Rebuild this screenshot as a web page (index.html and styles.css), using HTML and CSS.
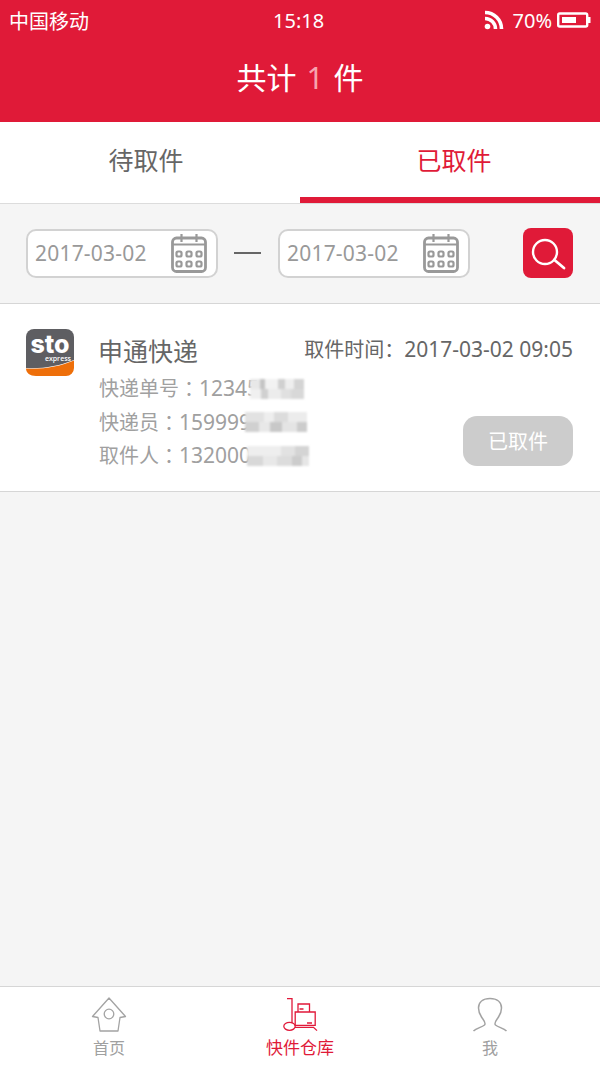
FILE: index.html
```html
<!DOCTYPE html>
<html lang="zh-CN">
<head>
    <meta charset="UTF-8">
    <meta name="viewport" content="width=device-width, initial-scale=1.0">
    <title>快件仓库</title>
    <link rel="stylesheet" href="styles.css">
</head>
<body>

<div class="page">
    <header class="top">
        <div class="status">
            <span class="carrier">中国移动</span>
            <span class="clock">15:18</span>
            <div class="status-right">
                <svg class="wifi" viewBox="0 0 20 20" width="20" height="20">
                    <circle cx="3.500" cy="16.500" r="2.800" fill="#fff"/>
                    <path d="M1 8.500a10.500 10.500 0 0 1 10.500 10.500M1 2.500a16.500 16.500 0 0 1 16.500 16.500" fill="none" stroke="#fff" stroke-width="3.600"/>
                </svg>
                <span class="percent">70%</span>
                <svg class="battery" viewBox="0 0 34 16" width="34" height="16">
                    <rect x="1.200" y="1.500" width="29" height="13" rx="1.500" fill="none" stroke="#fff" stroke-width="2.400"/>
                    <rect x="5" y="5" width="14" height="6" fill="#fff"/>
                    <rect x="31" y="5" width="2.500" height="6" fill="#fff"/>
                </svg>
            </div>
        </div>
        <h1 class="total">共计 <span class="total-num">1</span> 件</h1>
    </header>

    <nav class="tabs">
        <div class="tab">待取件</div>
        <div class="tab tab-on">已取件</div>
    </nav>

    <div class="filter">
        <div class="date-box">
            <span>2017-03-02</span>
            <svg class="cal" viewBox="0 0 36 39" width="36" height="39">
                <rect x="1.500" y="4" width="33" height="33.500" rx="4" fill="none" stroke="#999" stroke-width="2.800"/>
                <path d="M1.500 10.500h33M10.500 0v8M25.500 0v8" fill="none" stroke="#999" stroke-width="2.200"/>
                <g fill="none" stroke="#999" stroke-width="2.200">
                    <rect x="5.500" y="17.500" width="5" height="5" rx="1.500"/><rect x="15.500" y="17.500" width="5" height="5" rx="1.500"/><rect x="25.500" y="17.500" width="5" height="5" rx="1.500"/>
                    <rect x="5.500" y="27.500" width="5" height="5" rx="1.500"/><rect x="15.500" y="27.500" width="5" height="5" rx="1.500"/><rect x="25.500" y="27.500" width="5" height="5" rx="1.500"/>
                </g>
            </svg>
        </div>
        <div class="dash"></div>
        <div class="date-box">
            <span>2017-03-02</span>
            <svg class="cal" viewBox="0 0 36 39" width="36" height="39">
                <rect x="1.500" y="4" width="33" height="33.500" rx="4" fill="none" stroke="#999" stroke-width="2.800"/>
                <path d="M1.500 10.500h33M10.500 0v8M25.500 0v8" fill="none" stroke="#999" stroke-width="2.200"/>
                <g fill="none" stroke="#999" stroke-width="2.200">
                    <rect x="5.500" y="17.500" width="5" height="5" rx="1.500"/><rect x="15.500" y="17.500" width="5" height="5" rx="1.500"/><rect x="25.500" y="17.500" width="5" height="5" rx="1.500"/>
                    <rect x="5.500" y="27.500" width="5" height="5" rx="1.500"/><rect x="15.500" y="27.500" width="5" height="5" rx="1.500"/><rect x="25.500" y="27.500" width="5" height="5" rx="1.500"/>
                </g>
            </svg>
        </div>
        <button class="search-btn">
            <svg viewBox="0 0 50 50" width="50" height="50">
                <circle cx="22" cy="24" r="12" fill="none" stroke="#fff" stroke-width="2.400"/>
                <path d="M31.500 32l9.500 8" fill="none" stroke="#fff" stroke-width="2.800" stroke-linecap="round"/>
            </svg>
        </button>
    </div>

    <section class="card">
        <svg class="logo" viewBox="0 0 48 47" width="48" height="47">
            <path d="M8 0h32a8 8 0 0 1 8 8v23c-15 6-32 9-48 8V8a8 8 0 0 1 8-8z" fill="#5e5e62"/>
            <path d="M0 39.500c17 1 34-2 48-8v7.500a8 8 0 0 1-8 8H10c-6 0-10-3-10-7.500z" fill="#ee6f0a"/>
            <text class="logo-sto" x="24" y="24" text-anchor="middle">sto</text>
            <text class="logo-exp" x="45" y="31.500" text-anchor="end">express</text>
        </svg>
        <div class="info">
            <h2 class="name">申通快递</h2>
            <p class="line">快递单号<span class="colon">：</span><span class="num">12345</span><span class="blur blur-a"></span></p>
            <p class="line">快递员<span class="colon">：</span><span class="num">159999</span><span class="blur blur-b"></span></p>
            <p class="line">取件人<span class="colon">：</span><span class="num">132000</span><span class="blur blur-c"></span></p>
        </div>
        <div class="side">
            <div class="pick-time">取件时间<span class="colon">：</span><span class="num">2017-03-02 09:05</span></div>
            <div class="pick-btn">已取件</div>
        </div>
    </section>

    <div class="empty"></div>

    <footer class="bar">
        <div class="bar-item bar-home">
            <svg viewBox="0 0 36 36" width="36" height="36" fill="none" stroke="#a3a3a3" stroke-width="1.300">
                <path d="M18 1L1.500 19.500l5.500 1 2 13.500h18l2-13.500 5.500-1z" stroke-linejoin="round"/>
                <circle cx="18" cy="17" r="4.800"/>
            </svg>
            <span>首页</span>
        </div>
        <div class="bar-item bar-on">
            <svg viewBox="0 0 36 36" width="36" height="36" fill="none" stroke="#e1193a" stroke-width="1.300">
                <path d="M5 1.700h5v24.500"/>
                <ellipse cx="7.500" cy="29.300" rx="5.700" ry="4"/>
                <path d="M13 30.300h18.500l3.500 3.300"/>
                <path d="M16 15V7h11.500v8M13.200 28.300V15h20v13.300zM17.500 12h4M25 26h5"/>
            </svg>
            <span>快件仓库</span>
        </div>
        <div class="bar-item bar-me">
            <svg viewBox="0 0 36 36" width="36" height="36" fill="none" stroke="#a3a3a3" stroke-width="1.500">
                <path d="M1.500 34c3-3 8-3.500 11-6 2-2-1-5-3-8-2-3-3-6-3-9C6.500 5 11 1.500 18 1.500S29.500 5 29.500 11c0 3-1 6-3 9-2 3-5 6-3 8 3 2.500 8 3 11 6"/>
            </svg>
            <span>我</span>
        </div>
    </footer>
</div>

</body>
</html>
```

FILE: styles.css
```css
* {
    margin: 0;
    padding: 0;
    box-sizing: border-box;
}

body {
    font-family: "Noto Sans", "Noto Sans CJK SC", sans-serif;
    background-color: #f5f5f5;
}

.page {
    display: flex;
    flex-direction: column;
    width: 600px;
    height: 1067px;
    overflow: hidden;
}

.top {
    height: 122px;
    background-color: #e01a38;
    color: white;
}

.status {
    display: flex;
    justify-content: space-between;
    align-items: center;
    height: 40px;
    padding: 0 9px 0 9px;
    font-size: 20px;
    position: relative;
}

.clock {
    position: absolute;
    left: 273px;
}

.status-right {
    display: flex;
    align-items: center;
    gap: 9px;
}

.percent {
    margin-right: -4px;
}

.total {
    font-size: 30px;
    font-weight: 400;
    text-align: center;
    line-height: 76px;
    word-spacing: 2px;
}

.total-num {
    color: #f7a3b0;
}

.tabs {
    display: flex;
    height: 82px;
    background: white;
    border-bottom: 1px solid #dcdcdc;
}

.tab {
    flex: 0 0 50%;
    display: flex;
    justify-content: center;
    align-items: center;
    font-size: 25px;
    color: #666;
    padding: 0 8px 8px 0;
}

.tab-on {
    color: #e01a38;
    border-bottom: 6px solid #e01a38;
    padding: 0 0 2px 8px;
}

.filter {
    display: flex;
    align-items: center;
    height: 100px;
    padding: 0 27px 1px 26px;
    border-bottom: 1px solid #d6d6d6;
}

.date-box {
    display: flex;
    justify-content: space-between;
    align-items: center;
    width: 192px;
    height: 49px;
    padding: 0 9px 0 7px;
    background: white;
    border: 2px solid #d2d2d2;
    border-radius: 10px;
    font-size: 21px;
    letter-spacing: 0.2px;
    color: #999;
}

.dash {
    width: 27px;
    height: 2px;
    margin: 0 17px 0 16px;
    background-color: #666;
}

.search-btn {
    width: 50px;
    height: 50px;
    margin-left: auto;
    background-color: #e01a38;
    border: none;
    border-radius: 8px;
}

.card {
    display: flex;
    height: 188px;
    padding: 25px 27px 0 26px;
    background: white;
    border-bottom: 1px solid #d6d6d6;
}

.logo {
    flex-shrink: 0;
    margin-right: 25px;
}

.logo-sto {
    font-family: Inter, sans-serif;
    font-size: 25px;
    font-weight: 800;
    fill: white;
}

.logo-exp {
    font-family: "Open Sans", sans-serif;
    font-size: 7px;
    font-weight: 600;
    fill: white;
}

.info {
    flex: 1;
    min-width: 0;
    padding-top: 1px;
}

.name {
    font-size: 25px;
    font-weight: 400;
    line-height: 42px;
    color: #666;
    margin-left: -1px;
}

.line {
    display: flex;
    align-items: center;
    font-size: 20px;
    line-height: 33.500px;
    color: #a0a0a0;
    white-space: nowrap;
}

.colon {
    font-family: "Noto Sans CJK TC", sans-serif;
}

.num {
    font-size: 21px;
}

.blur {
    display: inline-block;
    flex-shrink: 0;
    height: 20px;
    filter: blur(0.8px);
}

.blur-a {
    width: 54px;
    margin-left: -9px;
    background:
        linear-gradient(90deg, #e8e8e8 0 18%, #c4c4c4 18% 28%, #f2f2f2 28% 52%, #d0d0d0 52% 64%, #eee 64% 82%, #d4d4d4 82%) top / 100% 50% no-repeat,
        linear-gradient(90deg, #f0f0f0 0 20%, #d0d0d0 20% 34%, #ececec 34% 58%, #e0e0e0 58% 76%, #d8d8d8 76%) bottom / 100% 50% no-repeat;
}

.blur-b {
    width: 62px;
    margin-left: -6px;
    background:
        linear-gradient(90deg, #e2e2e2 0 30%, #eee 30% 46%, #dcdcdc 46% 70%, #ececec 70%) top / 100% 50% no-repeat,
        linear-gradient(90deg, #d0d0d0 0 22%, #e8e8e8 22% 40%, #c8c8c8 40% 60%, #e4e4e4 60% 84%, #ccc 84%) bottom / 100% 50% no-repeat;
}

.blur-c {
    width: 62px;
    margin-left: -4px;
    background:
        linear-gradient(90deg, #eee 0 55%, #e2e2e2 55% 78%, #d4d4d4 78%) top / 100% 50% no-repeat,
        linear-gradient(90deg, #d8d8d8 0 26%, #e8e8e8 26% 48%, #dcdcdc 48% 72%, #ccc 72% 88%, #e6e6e6 88%) bottom / 100% 50% no-repeat;
}

.side {
    display: flex;
    flex-direction: column;
    flex-shrink: 0;
    align-items: flex-end;
}

.pick-time {
    font-size: 20px;
    line-height: 40px;
    color: #666;
    white-space: nowrap;
}

.pick-btn {
    display: flex;
    justify-content: center;
    align-items: center;
    width: 110px;
    height: 50px;
    margin-top: 46px;
    padding-bottom: 2px;
    background-color: #ccc;
    border-radius: 14px;
    font-size: 20px;
    color: white;
}

.empty {
    flex: 1;
}

.bar {
    display: flex;
    height: 81px;
    background: white;
    border-top: 1px solid #d6d6d6;
}

.bar-item {
    display: flex;
    flex-direction: column;
    align-items: center;
    flex: 0 0 200px;
    padding-top: 10px;
    font-size: 16px;
    line-height: 24px;
    color: #a0a0a0;
}

.bar-home {
    padding-left: 18px;
}

.bar-me {
    padding-right: 20px;
}

.bar-on {
    color: #e01a38;
    font-size: 17px;
}

.bar-item svg {
    margin-bottom: 3px;
}
```
